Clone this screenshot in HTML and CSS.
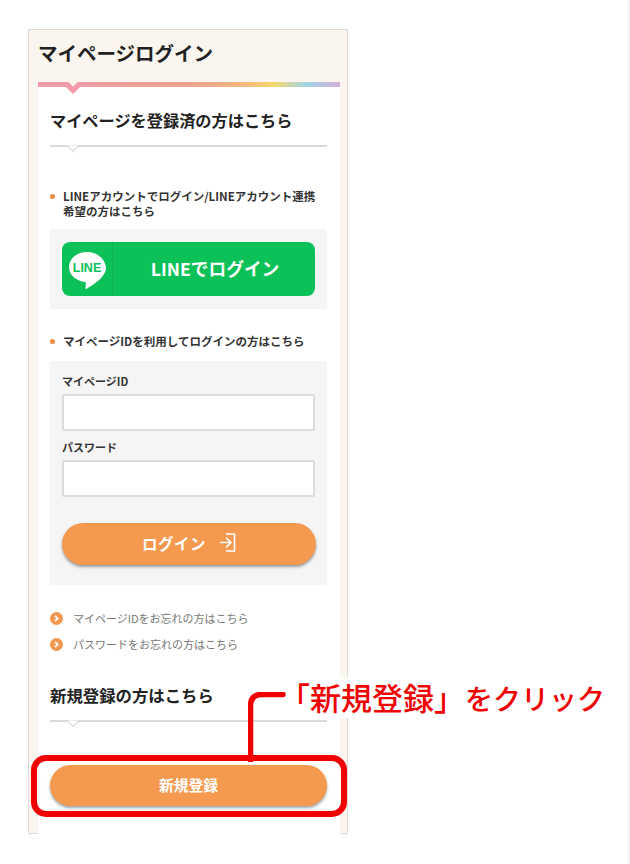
FILE: index.html
```html
<!DOCTYPE html>
<html lang="ja">
<head>
<meta charset="utf-8">
<title>マイページログイン</title>
<link rel="stylesheet" href="styles.css">
</head>
<body>
<div class="page">
  <main class="card">
    <h1 class="title">マイページログイン</h1>
    <div class="rainbow">
      <svg class="rainbow-caret" width="30" height="12" viewBox="0 0 30 12"><path d="M10 0H20L15 5Z" fill="#faf6ef"/><path d="M0 2.500H9L15 8.500 21 2.500H30" fill="none" stroke="#f39bab" stroke-width="5"/></svg>
    </div>
    <div class="inner">
      <h2 class="heading">マイページを登録済の方はこちら</h2>
      <div class="rule"><svg class="rule-caret" width="12" height="8" viewBox="0 0 12 8"><path d="M0 .5 6 6.500 12 .5" fill="#fff" stroke="#d9d9d9" stroke-width="1.200"/></svg></div>

      <p class="bullet bullet-line">LINEアカウントでログイン/LINEアカウント連携希望の方はこちら</p>
      <div class="panel panel-line">
        <a class="line-btn">
          <span class="line-icon">
            <svg width="38" height="39" viewBox="0 0 38 39"><path d="M19 1C9 1 1 7.700 1 16c0 7.500 6.500 13.700 15.300 14.800 1.500.3 1.800 1 1.500 2.700l-.4 3.500c0 1 .8 1.300 1.800.5 5-3.300 18.800-11 18.800-21C37 7.700 29 1 19 1Z" fill="#fff"/><text x="19" y="20.500" text-anchor="middle" class="line-logo-text">LINE</text></svg>
          </span>
          <span class="line-label">LINEでログイン</span>
        </a>
      </div>

      <p class="bullet bullet-id">マイページIDを利用してログインの方はこちら</p>
      <div class="panel panel-form">
        <label class="field-label">マイページID</label>
        <div class="input"></div>
        <label class="field-label field-label-2">パスワード</label>
        <div class="input"></div>
        <a class="btn btn-login">ログイン
          <svg class="login-icon" width="17" height="19" viewBox="0 0 17 19"><path d="M7 1H15.500V18H7M1 9.500H11.500M7 4.500 12 9.500 7 14.500" fill="none" stroke="#fff" stroke-width="1.600"/></svg>
        </a>
      </div>

      <ul class="links">
        <li class="link"><svg width="13" height="13" viewBox="0 0 13 13"><circle cx="6.500" cy="6.500" r="6.500" fill="#f4974e"/><path d="M5 3.800 7.700 6.500 5 9.200" fill="none" stroke="#fff" stroke-width="1.800"/></svg>マイページIDをお忘れの方はこちら</li>
        <li class="link"><svg width="13" height="13" viewBox="0 0 13 13"><circle cx="6.500" cy="6.500" r="6.500" fill="#f4974e"/><path d="M5 3.800 7.700 6.500 5 9.200" fill="none" stroke="#fff" stroke-width="1.800"/></svg>パスワードをお忘れの方はこちら</li>
      </ul>

      <h2 class="heading heading-new">新規登録の方はこちら</h2>
      <div class="rule"><svg class="rule-caret" width="12" height="8" viewBox="0 0 12 8"><path d="M0 .5 6 6.500 12 .5" fill="#fff" stroke="#d9d9d9" stroke-width="1.200"/></svg></div>

      <a class="btn btn-new">新規登録</a>
    </div>
  </main>

  <div class="note"><span class="note-key">「新規登録」</span>をクリック</div>
  <svg class="connector" width="50" height="70" viewBox="0 0 50 70"><path d="M2.500 70V14Q2.500 2.500 14 2.500H35" fill="none" stroke="#f00000" stroke-width="5.500" stroke-linecap="round"/></svg>
  <div class="highlight"></div>
</div>
</body>
</html>
```

FILE: styles.css
```css
* { box-sizing: border-box; }

html, body { margin: 0; padding: 0; background: #fff; }

body {
  font-family: "Noto Sans CJK JP", "Noto Sans", sans-serif;
  color: #222;
}

.page {
  position: relative;
  width: 630px;
  height: 864px;
  padding: 29px 0 0 28px;
  overflow: hidden;
  border-right: 2px solid #f0f0f0;
}

.card {
  width: 320px;
  height: 805px;
  background: #faf6ef;
  border: 1px solid #dedbd5;
  padding: 0 7px 0 9px;
}

.title {
  margin: 0;
  height: 52px;
  padding-top: 8px;
  font-size: 19.500px;
  line-height: 30px;
  font-weight: 700;
  white-space: nowrap;
}

.rainbow {
  position: relative;
  height: 5px;
  background: linear-gradient(90deg, #f39bab 0%, #f4a38f 50%, #f5b77c 68%, #f5d86a 78%, #9fd4e6 89%, #d3b0d8 100%);
}

.rainbow-caret {
  position: absolute;
  left: 20px;
  top: 0;
}

.inner {
  background: #fff;
  height: 747px;
  padding: 0 13px 0 12px;
}

.heading {
  margin: 0;
  padding-top: 19px;
  height: 58px;
  font-size: 16.200px;
  line-height: 28px;
  font-weight: 700;
  white-space: nowrap;
}

.rule {
  position: relative;
  height: 2px;
  background: #d9d9d9;
}

.rule-caret {
  position: absolute;
  left: 17px;
  top: 0;
}

.bullet {
  position: relative;
  margin: 0;
  padding-left: 13px;
  font-size: 11.500px;
  line-height: 15px;
  font-weight: 700;
  color: #333;
}

.bullet::before {
  content: "";
  position: absolute;
  left: 0;
  top: 5px;
  width: 5px;
  height: 5px;
  border-radius: 50%;
  background: #f08a3c;
}

.bullet-line { margin-top: 42px; padding-right: 8px; }
.bullet-id { margin-top: 25px; }

.panel {
  background: #f5f5f5;
  border-radius: 3px;
  padding: 13px 12px;
}

.panel-line { margin-top: 10px; height: 80px; }
.panel-form { margin-top: 12px; height: 224px; padding-top: 12px; }

.line-btn {
  display: flex;
  height: 54px;
  background: #0cc157;
  border-radius: 8px;
  color: #fff;
}

.line-icon {
  display: flex;
  align-items: center;
  justify-content: center;
  width: 51px;
  border-right: 1px solid #0bb04f;
  padding-top: 3px;
}

.line-logo-text {
  font-family: "Liberation Sans", sans-serif;
  font-size: 12.500px;
  font-weight: 700;
  fill: #0cc157;
}

.line-label {
  flex: 1;
  text-align: center;
  font-size: 17.700px;
  line-height: 52px;
  font-weight: 700;
  padding-left: 2px;
}

.field-label {
  display: block;
  font-size: 11px;
  line-height: 16px;
  font-weight: 700;
  color: #333;
}

.field-label-2 { margin-top: 8px; }

.input {
  height: 37px;
  margin-top: 5px;
  background: #fff;
  border: 2px solid #dcdcdc;
  border-radius: 2px;
}

.btn {
  display: flex;
  align-items: center;
  justify-content: center;
  background: #f5994f;
  color: #fff;
  font-weight: 700;
  box-shadow: 0 2px 3px rgba(40, 50, 60, .45);
}

.btn-login {
  height: 42px;
  margin-top: 26px;
  width: 254px;
  padding-bottom: 3px;
  border-radius: 21px;
  font-size: 15.500px;
  letter-spacing: .5px;
}

.login-icon { margin-left: 13px; }

.links {
  list-style: none;
  margin: 26px 0 0;
  padding: 0;
}

.link {
  display: flex;
  align-items: center;
  height: 14px;
  margin-bottom: 12px;
  font-size: 11px;
  line-height: 14px;
  color: #777;
  white-space: nowrap;
}

.link svg { margin-right: 10px; flex: none; }

.heading-new {
  padding-top: 0;
  margin-top: 31px;
  height: 38px;
  font-size: 16.400px;
  line-height: 26px;
}

.btn-new {
  height: 41px;
  margin-top: 43px;
  padding-bottom: 2px;
  border-radius: 21px;
  font-size: 14.800px;
}

.highlight {
  position: absolute;
  left: 31px;
  top: 755px;
  width: 316px;
  height: 62px;
  border: 6px solid #f00000;
  border-radius: 15px;
}

.connector {
  position: absolute;
  left: 248px;
  top: 692px;
}

.note {
  position: absolute;
  left: 279px;
  top: 677px;
  background: rgba(255, 255, 255, .9);
  color: #f00000;
  font-size: 28px;
  line-height: 40px;
  font-weight: 500;
  white-space: nowrap;
}

.note-key { font-size: 31px; }
```
